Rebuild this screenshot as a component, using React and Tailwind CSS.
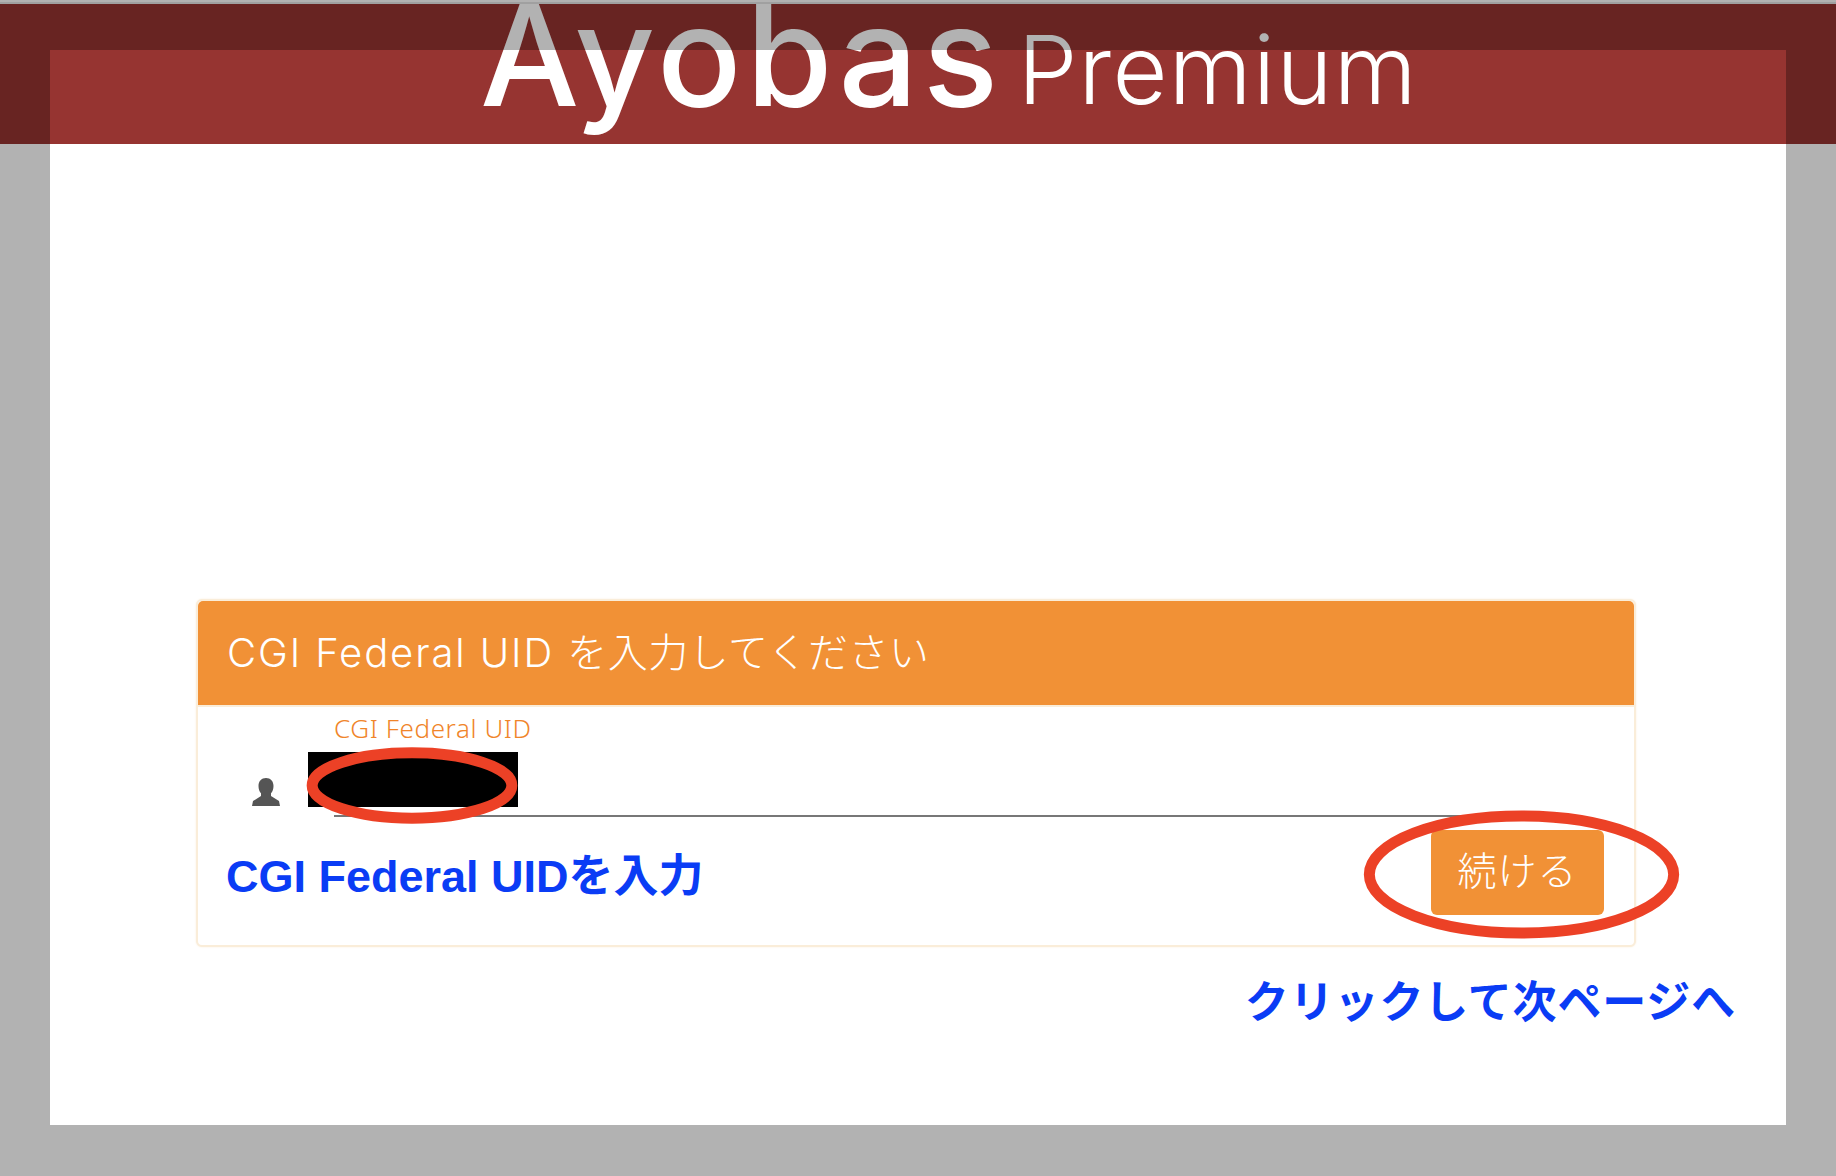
function Ring({ className }) {
  return (
    <svg className={`absolute pointer-events-none overflow-visible ${className}`} viewBox="0 0 100 100" preserveAspectRatio="none">
      <ellipse cx="50" cy="50" rx="48" ry="46" fill="none" stroke="#ec4126" strokeWidth="11" vectorEffect="non-scaling-stroke" />
    </svg>
  );
}

function PersonIcon() {
  return (
    <svg width="28" height="28" viewBox="0 0 28 28" className="block">
      <path
        fill="#555555"
        d="M14 0c-4.500 0-7.500 3.200-7.500 8 0 3.200 1 5.700 2.500 7.300v2.700L1 23 0 28h28l-1-5-8-5v-2.700c1.500-1.600 2.500-4.100 2.500-7.300 0-4.800-3-8-7.500-8z"
      />
    </svg>
  );
}

export default function App() {
  return (
    <div className="relative h-[1176px] w-[1836px] overflow-hidden bg-white">
      <div className="h-[2px] bg-white" />
      <div className="h-[2px] bg-[#e6e6e6]" />
      <header className="flex h-[140px] items-start justify-center overflow-hidden bg-[#963431] pl-[62px] text-white">
        <span className="font-['Inter'] text-[140px] leading-[102px] font-medium tracking-[4.6px]">Ayobas</span>
        <span className="ml-[15px] font-['Inter'] text-[95px] leading-[131px] font-light tracking-[1.3px]">Premium</span>
      </header>

      <main className="flex flex-col pl-[196px] pt-[455px]">
        <section className="relative w-[1440px] rounded-[6px] border-2 border-[#faedd9] bg-white shadow-[0_0_2px_#faedd9]">
          <div className="flex h-[106px] items-center rounded-t-[5px] border-b-2 border-[#faedd9] bg-[#f19136] pl-[29px] font-['Inter','Noto_Sans_CJK_JP',sans-serif] text-[40px] font-light whitespace-pre text-white">
            <span className="tracking-[1.9px]">CGI Federal UID </span>
            <span className="tracking-[0.5px]">を入力してください</span>
          </div>
          <div className="flex h-[238px] flex-col pl-[28px] pr-[30px]">
            <div className="flex h-[113px]">
              <div className="mt-[71px] ml-[26px] w-[28px]"><PersonIcon /></div>
              <div className="ml-[54px] mr-[44px] flex-1">
                <div className="pt-[4px] font-['Noto_Sans'] text-[26px] leading-[34px] font-light tracking-[0.6px] text-[#f0852a]">CGI Federal UID</div>
                <div className="relative h-[72px] border-b-2 border-[#777777]">
                  <div className="absolute top-[7px] left-[-26px] h-[55px] w-[210px] bg-black" />
                </div>
              </div>
            </div>
            <div className="flex items-start justify-between">
              <div className="mt-[29px] font-['Liberation_Sans','Noto_Sans_CJK_JP',sans-serif] text-[45px] leading-[56px] font-bold text-[#0a3cf5]">
                CGI Federal UIDを入力
              </div>
              <button className="mt-[10px] h-[85px] w-[173px] rounded-[6px] bg-[#f19136] pb-[8px] font-['Noto_Sans_CJK_JP'] text-[39px] font-light tracking-[1px] text-white">
                続ける
              </button>
            </div>
          </div>
          <Ring className="top-[149px] left-[110px] h-[71px] w-[208px]" />
          <Ring className="top-[210px] left-[1165px] h-[127px] w-[317px]" />
        </section>
        <div className="mt-[23px] w-[1540px] text-right font-['Noto_Sans_CJK_JP'] text-[44px] leading-[58px] font-bold tracking-[0.85px] text-[#0a3cf5]">
          クリックして次ページへ
        </div>
      </main>

      <div className="pointer-events-none absolute top-[50px] left-[50px] h-[1075px] w-[1736px] shadow-[0_0_0_2000px_rgba(0,0,0,0.3)]" />
    </div>
  );
}
